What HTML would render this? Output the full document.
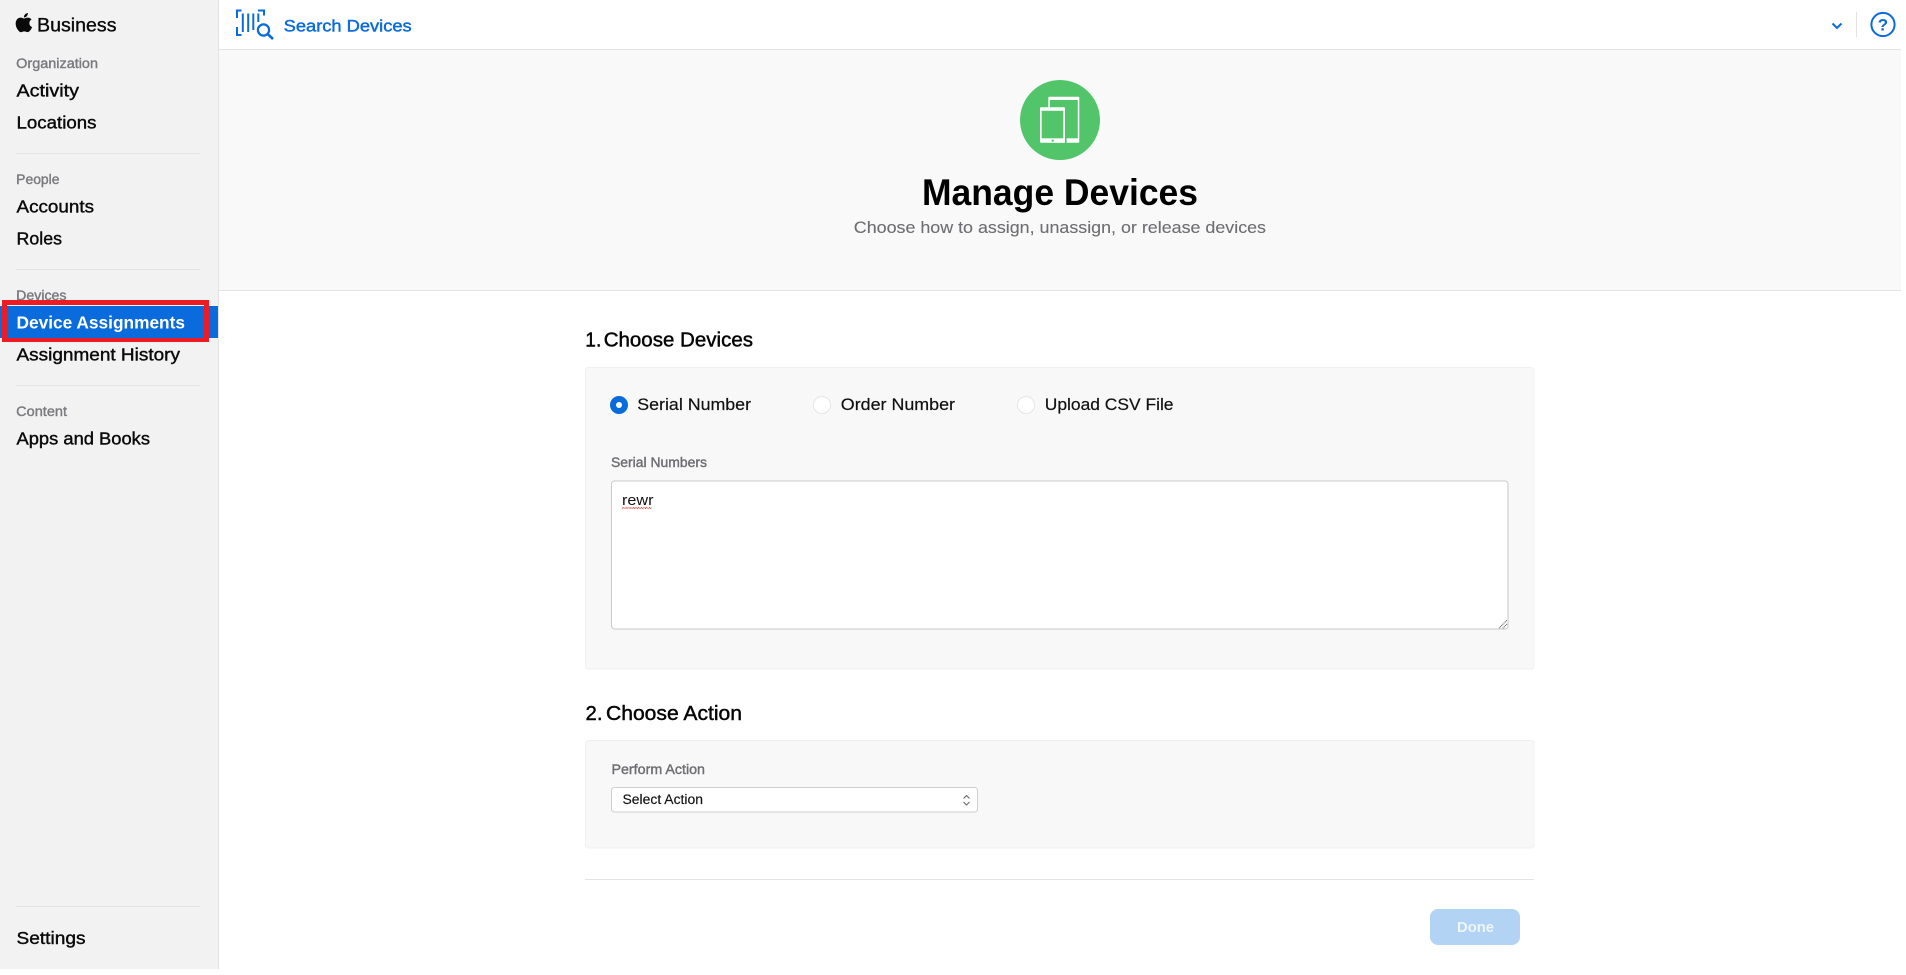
<!DOCTYPE html>
<html lang="en">
<head>
<meta charset="utf-8">
<title>Manage Devices</title>
<style>
html,body{margin:0;padding:0;background:#fff;width:1906px;height:975px;overflow:hidden}
svg{display:block}
text{font-family:"Liberation Sans",Arial,sans-serif}
.nav{font-size:17.5px;fill:#0a0a0a;stroke:#0a0a0a;stroke-width:.4px}
.sec{font-size:13.5px;fill:#7b7b7f;stroke:#7b7b7f;stroke-width:.4px}
.h2{font-size:20.5px;fill:#050505;stroke:#050505;stroke-width:.45px}
.rad{font-size:17px;fill:#111;stroke:#111;stroke-width:.2px}
.lab{font-size:13.5px;fill:#6e6e73;stroke:#6e6e73;stroke-width:.4px}
</style>
</head>
<body>
<svg width="1906" height="975" viewBox="0 0 1906 975" xmlns="http://www.w3.org/2000/svg">
<rect width="1906" height="975" fill="#fff"/>

<!-- sidebar -->
<rect x="0" y="0" width="218" height="969" fill="#f2f2f2"/>
<rect x="218" y="0" width="1" height="969" fill="#e3e3e3"/>

<path transform="translate(13.8 13) scale(.84 .8)" fill="#0a0a0a" d="M12.152 6.896c-.948 0-2.415-1.078-3.96-1.04-2.04.027-3.91 1.183-4.961 3.014-2.117 3.675-.546 9.103 1.519 12.09 1.013 1.454 2.208 3.09 3.792 3.039 1.52-.065 2.09-.987 3.935-.987 1.831 0 2.35.987 3.96.948 1.637-.026 2.676-1.48 3.676-2.948 1.156-1.688 1.636-3.325 1.662-3.415-.039-.013-3.182-1.221-3.22-4.857-.026-3.04 2.48-4.494 2.597-4.559-1.429-2.09-3.623-2.324-4.39-2.376-2-.156-3.675 1.09-4.61 1.09zM15.53 3.83c.843-1.012 1.4-2.427 1.245-3.83-1.207.052-2.662.805-3.532 1.818-.78.896-1.454 2.338-1.273 3.714 1.338.104 2.715-.688 3.559-1.701"/>
<text x="37" y="31.7" font-size="19" fill="#0a0a0a" stroke="#0a0a0a" stroke-width=".35" textLength="79.5" lengthAdjust="spacingAndGlyphs">Business</text>

<text class="sec" x="16.2" y="68" textLength="81.8" lengthAdjust="spacingAndGlyphs">Organization</text>
<text class="nav" x="16.5" y="96.5" textLength="62.5" lengthAdjust="spacingAndGlyphs">Activity</text>
<text class="nav" x="16.5" y="128.5" textLength="80" lengthAdjust="spacingAndGlyphs">Locations</text>
<rect x="16" y="153" width="184" height="1" fill="#e3e3e3"/>

<text class="sec" x="16.2" y="184" textLength="43.3" lengthAdjust="spacingAndGlyphs">People</text>
<text class="nav" x="16.5" y="212.5" textLength="77.5" lengthAdjust="spacingAndGlyphs">Accounts</text>
<text class="nav" x="16.5" y="244.5" textLength="45.5" lengthAdjust="spacingAndGlyphs">Roles</text>
<rect x="16" y="269" width="184" height="1" fill="#e3e3e3"/>

<text class="sec" x="16.2" y="300" textLength="50.3" lengthAdjust="spacingAndGlyphs">Devices</text>
<rect x="0" y="306" width="218" height="32" fill="#0a6bdc"/>
<rect x="7" y="305" width="197" height="1" fill="#f2f6fc"/>
<path fill="#ed1c24" fill-rule="evenodd" d="M2 300H209V342H2ZM7 305V338H204V305Z"/>
<text x="16.5" y="328.3" font-size="17.5" font-weight="700" fill="#fff" textLength="168.5" lengthAdjust="spacingAndGlyphs">Device Assignments</text>
<text class="nav" x="16.5" y="360.5" textLength="163.5" lengthAdjust="spacingAndGlyphs">Assignment History</text>
<rect x="16" y="385" width="184" height="1" fill="#e3e3e3"/>

<text class="sec" x="16.2" y="416" textLength="50.8" lengthAdjust="spacingAndGlyphs">Content</text>
<text class="nav" x="16.5" y="444.5" textLength="133.5" lengthAdjust="spacingAndGlyphs">Apps and Books</text>

<rect x="16" y="906" width="184" height="1" fill="#e3e3e3"/>
<text class="nav" x="16.5" y="943.8" textLength="69" lengthAdjust="spacingAndGlyphs">Settings</text>

<!-- top bar -->
<rect x="219" y="49" width="1682" height="1" fill="#e3e3e3"/>
<g fill="none" stroke="#0a6bdc" stroke-width="2">
  <path d="M241.5 10.5H237V18M237 27V35H241.5M258 10.5H264V15.5"/>
  <path d="M242.8 13.5V32M248.2 13.5V32M253.3 13.5V30M258.3 13.5V22"/>
  <circle cx="263.5" cy="30" r="5.6" stroke-width="2.2"/>
  <path d="M267.6 34L273 39" stroke-width="2.6"/>
</g>
<text x="283.7" y="31.5" font-size="17" fill="#0a6bdc" stroke="#0a6bdc" stroke-width=".45" textLength="128" lengthAdjust="spacingAndGlyphs">Search Devices</text>
<path d="M1832.5 23.5L1837 28L1841.5 23.5" fill="none" stroke="#0a6bdc" stroke-width="2"/>
<rect x="1856" y="12" width="1" height="25" fill="#e3e3e3"/>
<circle cx="1883" cy="24.5" r="11.6" fill="none" stroke="#0a6bdc" stroke-width="2"/>
<text x="1883" y="30.5" font-size="17" font-weight="700" fill="#0a6bdc" text-anchor="middle">?</text>

<!-- hero -->
<rect x="219" y="50" width="1682" height="240" fill="#f9f9f9"/>
<rect x="219" y="290" width="1682" height="1" fill="#e3e3e3"/>
<circle cx="1060" cy="120" r="40" fill="#52c46a"/>
<rect x="1048.3" y="96.7" width="31" height="46" rx="1" fill="#fff"/>
<rect x="1049.8" y="100" width="28" height="38.3" fill="#52c46a"/>
<rect x="1065" y="104" width="1.6" height="39" fill="#52c46a"/>
<rect x="1040" y="107.3" width="25" height="35.4" rx="1" fill="#fff"/>
<rect x="1041.7" y="110.8" width="21.6" height="27.5" fill="#52c46a"/>
<circle cx="1052.7" cy="140.6" r="1.1" fill="#52c46a"/>
<text x="922" y="205" font-size="37" font-weight="700" fill="#000" textLength="276" lengthAdjust="spacingAndGlyphs">Manage Devices</text>
<text x="853.8" y="233" font-size="16.8" fill="#6e6e73" stroke="#6e6e73" stroke-width=".12" textLength="412.2" lengthAdjust="spacingAndGlyphs">Choose how to assign, unassign, or release devices</text>

<!-- section 1 -->
<text class="h2" x="585.3" y="346.3" textLength="16" lengthAdjust="spacingAndGlyphs">1.</text>
<text class="h2" x="603.7" y="346.3" textLength="149.3" lengthAdjust="spacingAndGlyphs">Choose Devices</text>
<rect x="585.5" y="367.5" width="948.5" height="301.5" rx="3" fill="#f8f8f8" stroke="#f0f0f0"/>
<circle cx="619" cy="405" r="9" fill="#0a6bdc"/>
<circle cx="619" cy="405" r="3" fill="#fff"/>
<text class="rad" x="637.3" y="410" textLength="113.7" lengthAdjust="spacingAndGlyphs">Serial Number</text>
<circle cx="822" cy="405" r="8.5" fill="#fff" stroke="#e5e5e5"/>
<text class="rad" x="840.8" y="410" textLength="114.2" lengthAdjust="spacingAndGlyphs">Order Number</text>
<circle cx="1026" cy="405" r="8.5" fill="#fff" stroke="#e5e5e5"/>
<text class="rad" x="1044.8" y="410" textLength="128.7" lengthAdjust="spacingAndGlyphs">Upload CSV File</text>
<text class="lab" x="611" y="467" textLength="96" lengthAdjust="spacingAndGlyphs">Serial Numbers</text>
<rect x="611.5" y="481" width="896.5" height="148" rx="3" fill="#fff" stroke="#c9c9c9" stroke-width="1"/>
<text x="622" y="505" font-size="15" fill="#111" textLength="31.5" lengthAdjust="spacingAndGlyphs">rewr</text>
<path d="M622 508.5l1.3-1 1.3 1 1.3-1 1.3 1 1.3-1 1.3 1 1.3-1 1.3 1 1.3-1 1.3 1 1.3-1 1.3 1 1.3-1 1.3 1 1.3-1 1.3 1 1.3-1 1.3 1 1.3-1 1.3 1 1.3-1 1.3 1 1.3-1" fill="none" stroke="#e2332f" stroke-width=".9" stroke-dasharray="1.2 .5"/>
<path d="M1499 628.3L1507 620M1502.7 628.3L1507 624" fill="none" stroke="#555" stroke-width="1" stroke-dasharray="1 .7"/>

<!-- section 2 -->
<text class="h2" x="585.5" y="720" textLength="17" lengthAdjust="spacingAndGlyphs">2.</text>
<text class="h2" x="606" y="720" textLength="136" lengthAdjust="spacingAndGlyphs">Choose Action</text>
<rect x="585.5" y="740.5" width="948.5" height="107.5" rx="3" fill="#f8f8f8" stroke="#f0f0f0"/>
<text class="lab" x="611.5" y="774" textLength="93.5" lengthAdjust="spacingAndGlyphs">Perform Action</text>
<rect x="611.5" y="787.5" width="366" height="24.5" rx="3" fill="#fff" stroke="#cfcfcf" stroke-width="1"/>
<text x="622.5" y="804" font-size="13.5" fill="#111" stroke="#111" stroke-width=".15" textLength="80.5" lengthAdjust="spacingAndGlyphs">Select Action</text>
<path d="M963.5 798.5L966.5 795.5L969.5 798.5M963.5 802L966.5 805L969.5 802" fill="none" stroke="#666" stroke-width="1"/>

<rect x="585" y="879" width="949" height="1" fill="#e3e3e3"/>

<rect x="1430" y="909" width="90" height="36" rx="8" fill="#b3d3f5"/>
<text x="1457" y="932" font-size="15" font-weight="700" fill="#eef5fd" textLength="37" lengthAdjust="spacingAndGlyphs">Done</text>
</svg>
</body>
</html>
